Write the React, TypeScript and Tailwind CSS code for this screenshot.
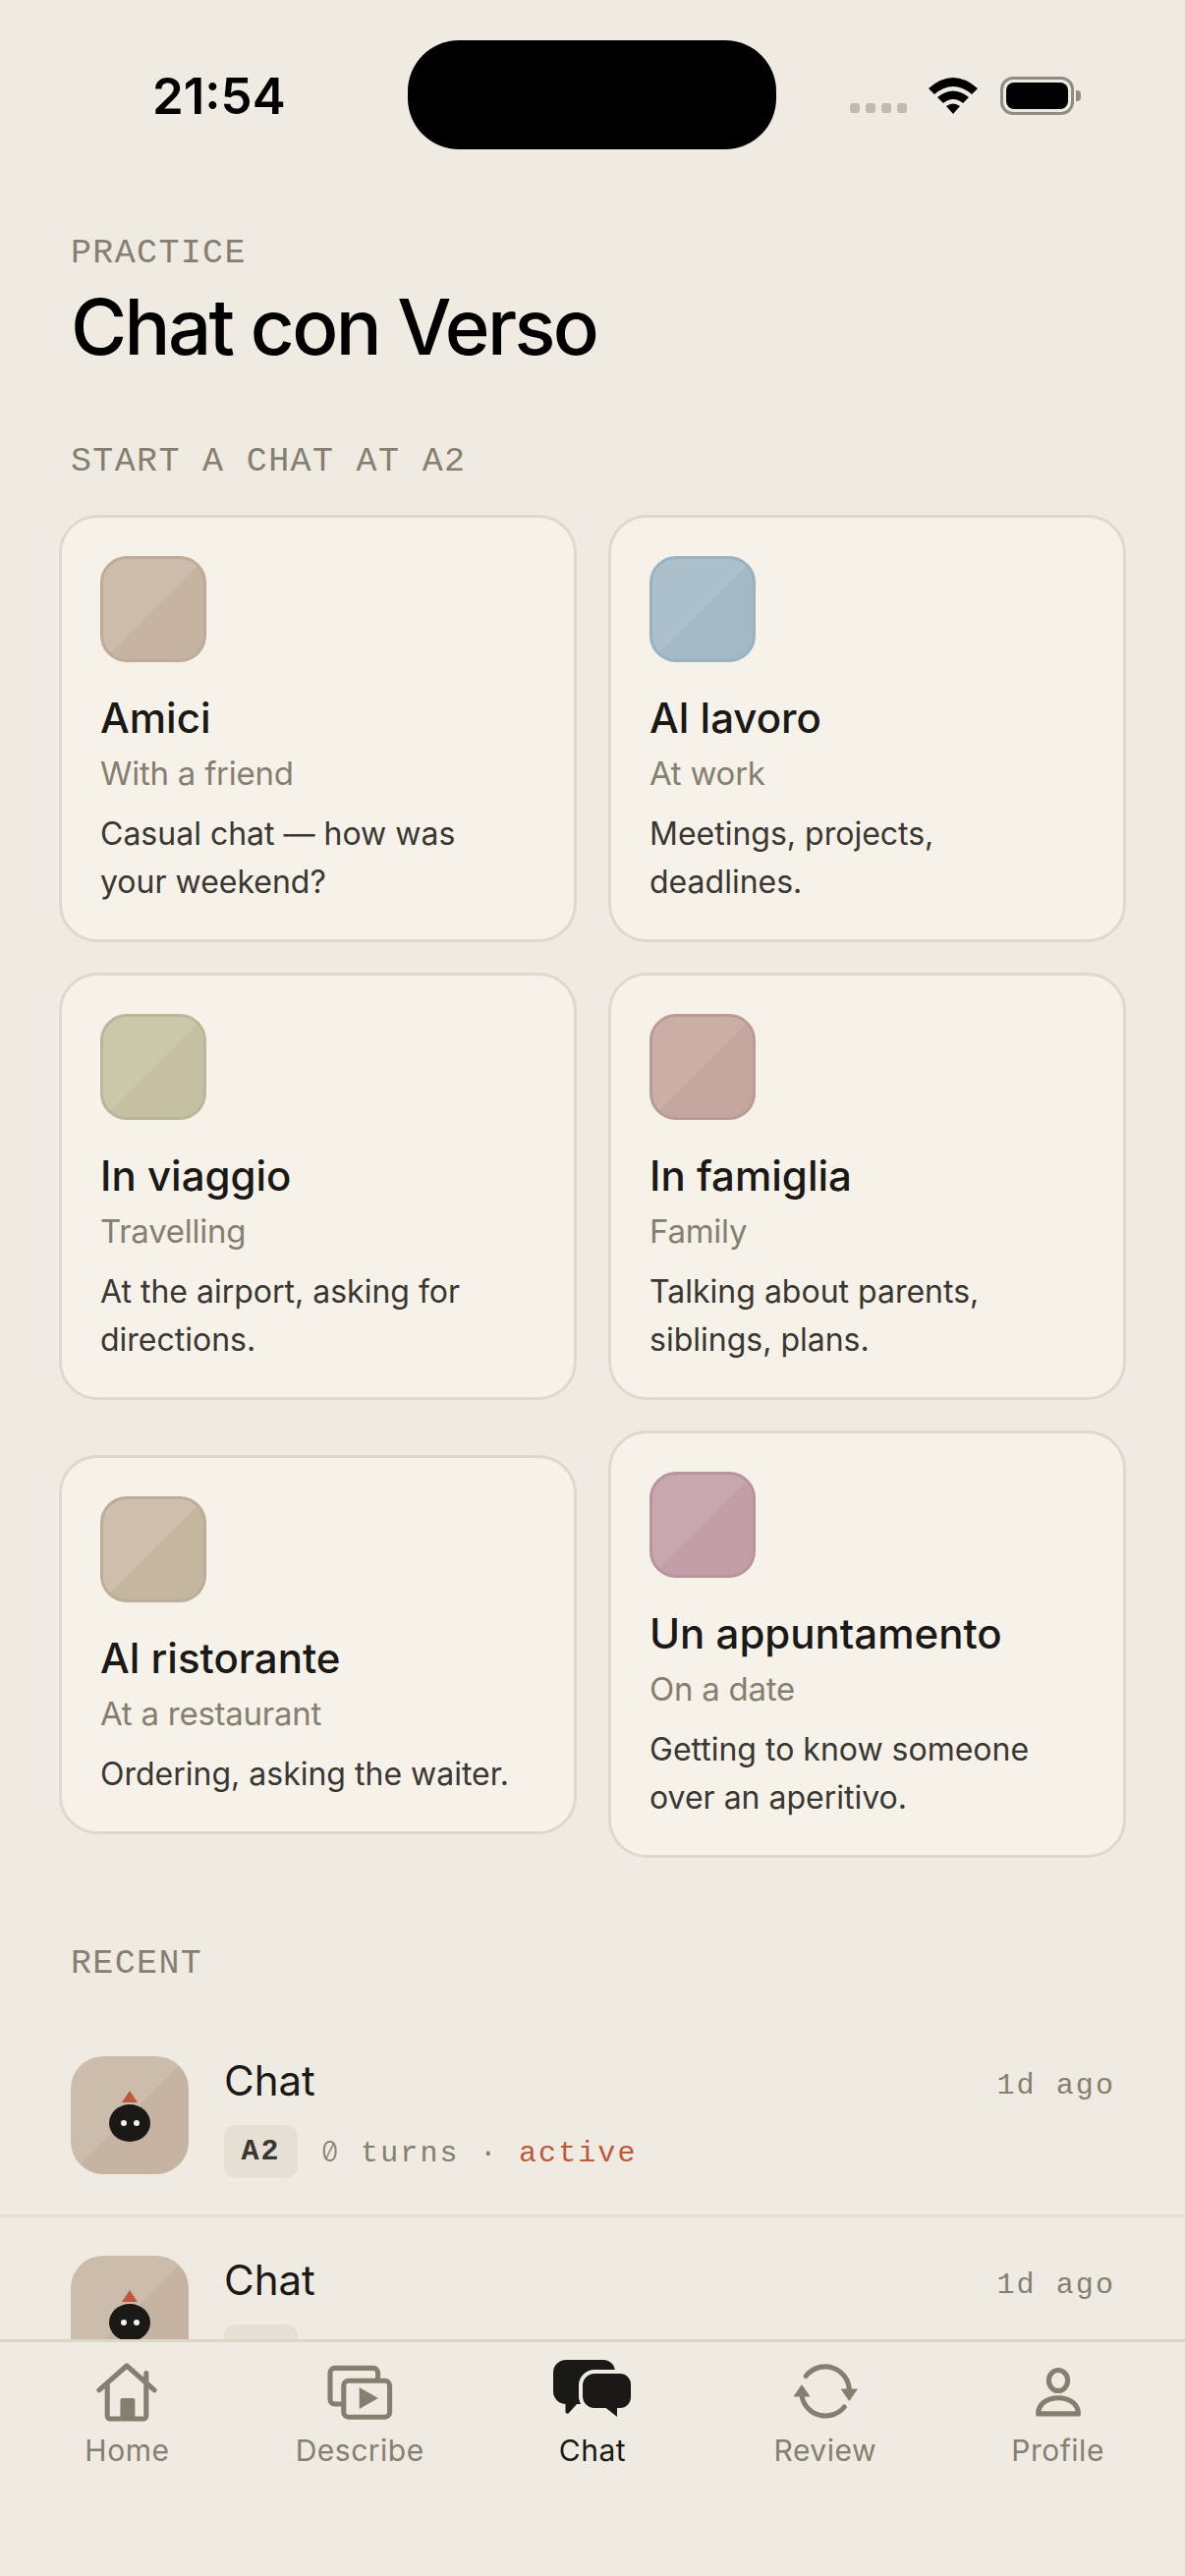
import React from 'react'

const sans = 'font-["Inter",sans-serif]'
const mono = 'font-["Liberation_Mono",monospace]'

const scenes = [
  {
    title: 'Amici',
    sub: 'With a friend',
    desc: 'Casual chat — how was your weekend?',
    thumb: 'bg-[linear-gradient(135deg,#ccbcac_50%,#c6b3a1_50%)] border-[#bfab98]'
  },
  {
    title: 'Al lavoro',
    sub: 'At work',
    desc: 'Meetings, projects, deadlines.',
    thumb: 'bg-[linear-gradient(135deg,#abc0ca_50%,#a3b9c5_50%)] border-[#9ab2c0]'
  },
  {
    title: 'In viaggio',
    sub: 'Travelling',
    desc: 'At the airport, asking for directions.',
    thumb: 'bg-[linear-gradient(135deg,#cbc7aa_50%,#c4c0a1_50%)] border-[#bbb79c]'
  },
  {
    title: 'In famiglia',
    sub: 'Family',
    desc: 'Talking about parents, siblings, plans.',
    thumb: 'bg-[linear-gradient(135deg,#cbafa7_50%,#c4a69f_50%)] border-[#b89d96]'
  },
  {
    title: 'Al ristorante',
    sub: 'At a restaurant',
    desc: 'Ordering, asking the waiter.',
    thumb: 'bg-[linear-gradient(135deg,#cdbfac_50%,#c5b6a0_50%)] border-[#bbad99]'
  },
  {
    title: 'Un appuntamento',
    sub: 'On a date',
    desc: 'Getting to know someone over an aperitivo.',
    thumb: 'bg-[linear-gradient(135deg,#c8a8ae_50%,#c39ea6_50%)] border-[#b8959e]'
  }
]

function StatusBar() {
  return (
    <div className="h-[152px] pt-[41px] flex items-start shrink-0">
      <div className={`w-[415px] pl-[155px] pt-[27px] text-[51px] leading-[60px] font-semibold text-black ${sans}`}>21:54</div>
      <div className="w-[375px] h-[111px] rounded-[52px] bg-black" />
      <div className="flex items-end pl-[75px] pt-[37px]">
        <div className="flex gap-[6px] mb-px">
          <span className="w-[10px] h-[10px] rounded-[3px] bg-[#bfbbb2]" />
          <span className="w-[10px] h-[10px] rounded-[3px] bg-[#bfbbb2]" />
          <span className="w-[10px] h-[10px] rounded-[3px] bg-[#bfbbb2]" />
          <span className="w-[10px] h-[10px] rounded-[3px] bg-[#bfbbb2]" />
        </div>
        <svg className="ml-[22px]" width="50" height="37" viewBox="0 0 50 37">
          <path d="M0 11 Q25 -11 50 11 L44 17 Q25 1 6 17 Z" fill="#000" />
          <path d="M9 20 Q25 7 41 20 L35 26 Q25 18 15 26 Z" fill="#000" />
          <path d="M18 29 Q25 24 32 29 L25 37 Z" fill="#000" />
        </svg>
        <div className="ml-[23px] w-[75px] h-[39px] rounded-[13px] border-[3px] border-[#8f8c84] p-[3px] -mb-px relative">
          <div className="w-full h-full rounded-[8px] bg-black" />
          <span className="absolute -right-[10px] top-[11px] w-[5px] h-[11px] rounded-r-[4px] bg-[#8f8c84]" />
        </div>
      </div>
    </div>
  )
}

function Eyebrow({ children, className }: { children: React.ReactNode; className?: string }) {
  return (
    <div className={`${mono} text-[35px] leading-[40px] tracking-[1.35px] text-[#857f70] ${className ?? ''}`}>
      {children}
    </div>
  )
}

function SceneCard({ scene }: { scene: (typeof scenes)[number] }) {
  return (
    <div className="rounded-[39px] border-[3px] border-[#dfd9cb] bg-[#f6f2ea] px-[39px] pt-[39px] pb-[34px]">
      <div className={`w-[108px] h-[108px] rounded-[27px] border-[3px] ${scene.thumb}`} />
      <div className={`mt-[30px] text-[42px] leading-[54px] font-[450] text-[#1a1915] ${sans}`}>{scene.title}</div>
      <div className={`mt-[5px] text-[33px] leading-[48px] tracking-[-0.25px] text-[#857f70] ${sans}`}>{scene.sub}</div>
      <div className={`mt-[13px] max-w-[420px] text-[32px] leading-[49px] text-[#3a3732] ${sans}`}>{scene.desc}</div>
    </div>
  )
}

function Creature() {
  return (
    <div className="w-[120px] h-[120px] rounded-[33px] bg-[linear-gradient(135deg,#ccbcac_50%,#c6b3a1_50%)] shrink-0 flex flex-col items-center pt-[35px]">
      <span className="w-0 h-0 border-x-[8px] border-x-transparent border-b-[12px] border-b-[#bd583d]" />
      <span className="mt-[2px] w-[42px] h-[38px] rounded-[50%] bg-[#1a1915] flex items-center justify-center gap-[7px]">
        <span className="w-[6px] h-[6px] rounded-full bg-[#f6f2ea]" />
        <span className="w-[6px] h-[6px] rounded-full bg-[#f6f2ea]" />
      </span>
    </div>
  )
}

function RecentRow({ withMeta }: { withMeta?: boolean }) {
  return (
    <div className="h-[203px] pt-[39px] px-[72px] flex gap-[36px] border-b-[3px] border-[#e4dfd2] shrink-0">
      <Creature />
      <div className="flex-1">
        <div className="flex justify-between items-start">
          <div className={`text-[42px] leading-[52px] -mt-px text-[#1a1915] ${sans}`}>Chat</div>
          <div className={`${mono} text-[30px] leading-[40px] tracking-[2.1px] text-[#857f70] -mr-px mt-[10px]`}>1d ago</div>
        </div>
        <div className={`mt-[19px] flex items-center gap-[24px] ${mono} text-[30px] tracking-[2.1px]`}>
          <span className="w-[75px] h-[54px] rounded-[12px] bg-[#e5e0d3] flex items-center justify-center font-bold text-[#3a3732]">
            {withMeta ? 'A2' : ''}
          </span>
          {withMeta && (
            <span className="pt-[4px] text-[#857f70] whitespace-pre">
              <span className={`inline-block w-[20px] ${sans} font-light slashed-zero text-[28px] tracking-normal`}>0</span>
              {' turns · '}
              <span className="text-[#bd583d]">active</span>
            </span>
          )}
        </div>
      </div>
    </div>
  )
}

function TabIcon({ name }: { name: string }) {
  const stroke = {
    fill: 'none',
    stroke: '#857f70',
    strokeWidth: 1.7,
    strokeLinecap: 'round' as const,
    strokeLinejoin: 'round' as const
  }
  if (name === 'Home') {
    return (
      <svg width="72" height="72" viewBox="0 0 24 24">
        <path d="M2.6 11.3 12 3l9.4 8.3M5.4 9.5V20a1 1 0 0 0 1 1h11.2a1 1 0 0 0 1-1V5.5" {...stroke} />
        <rect x="9.8" y="14" width="5" height="7" rx="0.7" fill="#857f70" />
      </svg>
    )
  }
  if (name === 'Describe') {
    return (
      <svg width="72" height="72" viewBox="0 0 24 24">
        <path d="M5.8 16H3.6A1.6 1.6 0 0 1 2 14.400V5.400A1.600 1.600 0 0 1 3.600 3.800H16.600A1.600 1.600 0 0 1 18.200 5.400V7.600" {...stroke} />
        <rect x="6.600" y="8.100" width="15.600" height="12.300" rx="1.600" {...stroke} />
        <path d="M11.900 10.300 18.300 14l-6.400 3.700Z" fill="#857f70" />
      </svg>
    )
  }
  if (name === 'Chat') {
    return (
      <svg width="80" height="72" viewBox="0 0 80 72">
        <path d="M13 3h38a12 12 0 0 1 12 12v21a12 12 0 0 1-12 12H24l-8 9a2 2 0 0 1-3.500-1.300V48H13A13 13 0 0 1 0 35V16A13 13 0 0 1 13 3Z" fill="#1a1915" />
        <path d="M42 15h26a13 13 0 0 1 13 13v13a13 13 0 0 1-13 13h-1v11l-14-11H42a14 14 0 0 1-14-14V29a14 14 0 0 1 14-14Z" fill="#1a1915" stroke="#efebe3" strokeWidth="4" />
      </svg>
    )
  }
  if (name === 'Review') {
    return (
      <svg width="72" height="72" viewBox="0 0 24 24">
        <path d="M5.400 6.500A8.200 8.200 0 0 1 20.100 11.300" {...stroke} />
        <path d="M4 13.300A8.200 8.200 0 0 0 18.400 17" {...stroke} />
        <path d="M17.500 11h5.200l-2.600 3.700Z" fill="#857f70" stroke="#857f70" strokeWidth="0.400" strokeLinejoin="round" />
        <path d="M1.500 13.300h5L4 9.700Z" fill="#857f70" stroke="#857f70" strokeWidth="0.400" strokeLinejoin="round" />
      </svg>
    )
  }
  return (
    <svg width="72" height="72" viewBox="0 0 24 24">
      <ellipse cx="12" cy="8" rx="3.200" ry="3.500" {...stroke} />
      <path d="M5.200 19.300c0-3.300 3-5.400 6.800-5.400s6.800 2.100 6.800 5.400Z" {...stroke} />
    </svg>
  )
}

function TabBar() {
  const tabs = ['Home', 'Describe', 'Chat', 'Review', 'Profile']
  return (
    <div className="h-[241px] shrink-0 border-t-[3px] border-[#dcd6c9] bg-[#efebe3] px-[11px] pt-[15px] grid grid-cols-5 items-start">
      {tabs.map((tab) => (
        <div key={tab} className="flex flex-col items-center">
          <TabIcon name={tab} />
          <span className={`mt-[5px] text-[30px] leading-[36px] tracking-[0.5px] ${sans} ${tab === 'Chat' ? 'text-[#1a1915]' : 'text-[#857f70]'}`}>
            {tab}
          </span>
        </div>
      ))}
    </div>
  )
}

export default function App() {
  return (
    <div className="w-[1206px] h-[2622px] bg-[#efebe3] flex flex-col overflow-hidden">
      <StatusBar />
      <div className="flex-1 min-h-0 overflow-hidden flex flex-col">
        <Eyebrow className="mt-[86px] px-[72px]">PRACTICE</Eyebrow>
        <h1 className={`mt-[10px] px-[72px] text-[78px] leading-[90px] font-[450] tracking-[-2.6px] text-black ${sans}`}>Chat con Verso</h1>
        <Eyebrow className="mt-[72px] px-[72px]">START A CHAT AT A2</Eyebrow>
        <div className="mt-[34px] px-[60px] grid grid-cols-2 gap-x-[32px] gap-y-[31px] items-center shrink-0">
          {scenes.map((scene) => (
            <SceneCard key={scene.title} scene={scene} />
          ))}
        </div>
        <Eyebrow className="mt-[88px] px-[72px]">RECENT</Eyebrow>
        <div className="mt-[35px] flex flex-col">
          <RecentRow withMeta />
          <RecentRow />
        </div>
      </div>
      <TabBar />
    </div>
  )
}
